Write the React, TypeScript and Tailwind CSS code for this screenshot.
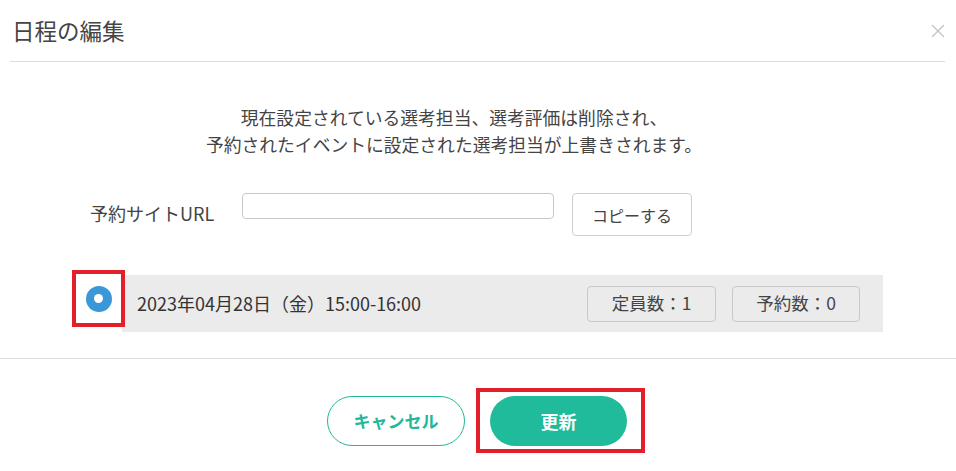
import { X } from 'lucide-react';

const font = { fontFamily: '"Noto Sans CJK JP", "Noto Sans", sans-serif' };

export default function App() {
  return (
    <div className="w-[956px] h-[471px] bg-white text-[#333] overflow-hidden" style={font}>
      {/* header */}
      <div className="flex items-center justify-between h-[61px] pl-[12px] pr-[7px]">
        <h1 className="text-[22.5px] leading-none text-[#444] font-normal">日程の編集</h1>
        <X className="w-[22px] h-[22px] text-[#c4c4c4]" strokeWidth={1.5} />
      </div>
      <div className="mx-[10px] w-[935px] border-t border-[#dcdcdc]" />

      {/* body */}
      <div className="pt-[42px] pb-[26px]">
        <p className="text-center text-[17.8px] leading-[27px] text-[#444] pr-[48px]">
          現在設定されている選考担当、選考評価は削除され、
          <br />
          予約されたイベントに設定された選考担当が上書きされます。
        </p>

        <div className="flex items-start mt-[35px] pl-[90px]">
          <span className="w-[152px] pt-[7px] text-[18px] leading-[26px] text-[#444]">予約サイトURL</span>
          <div className="w-[312px] h-[26px] rounded-[4px] border border-[#c8c8c8] bg-white" />
          <button className="ml-[18px] w-[120px] h-[43px] rounded-[4px] border border-[#cfcfcf] bg-white text-[16px] text-[#444]">
            コピーする
          </button>
        </div>

        <div className="flex items-start mt-[34px] pl-[72px]">
          <div className="relative z-10 w-[53px] h-[57px] border-4 border-[#e3202a] flex items-center justify-center">
            <span className="w-[26px] h-[26px] rounded-full bg-[#3a97d8] flex items-center justify-center">
              <span className="w-[9px] h-[9px] rounded-full bg-white" />
            </span>
          </div>
          <div className="ml-[-3px] mt-[5px] w-[761px] h-[57px] bg-[#ebebeb] flex items-center pl-[15px] pr-[23px]">
            <span className="text-[18px] text-[#333]">2023年04月28日（金）15:00-16:00</span>
            <div className="ml-auto flex gap-[16px]">
              <span className="w-[129px] h-[36px] rounded-[4px] border border-[#c8c8c8] flex items-center justify-center text-[17.5px] text-[#444]">
                定員数：1
              </span>
              <span className="w-[128px] h-[36px] rounded-[4px] border border-[#c8c8c8] flex items-center justify-center text-[17.5px] text-[#444]">
                予約数：0
              </span>
            </div>
          </div>
        </div>
      </div>

      <div className="border-t border-[#dedede]" />

      {/* footer */}
      <div className="flex items-start justify-center pt-[29px] pl-[16px]">
        <button className="mt-[8px] w-[138px] h-[50px] rounded-full border border-[#1fb89a] bg-white text-[#1fb89a] text-[17px] font-bold">
          キャンセル
        </button>
        <div className="ml-[11px] border-4 border-[#e3202a] pt-[4px] pb-[3px] pl-[10px] pr-[14px]">
          <button className="w-[137px] h-[50px] rounded-full bg-[#20bb9b] text-white text-[18px] font-bold">
            更新
          </button>
        </div>
      </div>
    </div>
  );
}
